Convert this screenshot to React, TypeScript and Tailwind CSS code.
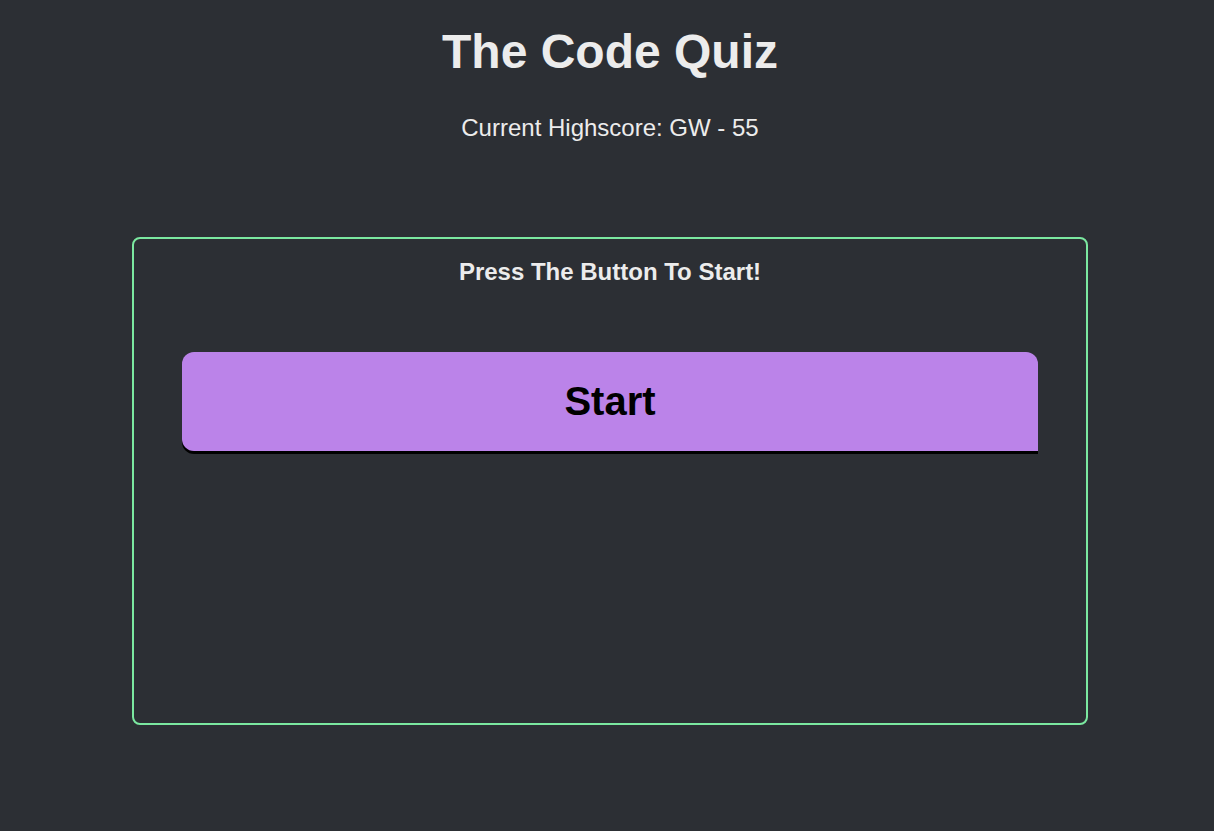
export default function App() {
  return (
    <div className="min-h-[831px] w-full bg-[#2c2f34] pl-[6px] font-['Liberation_Sans',Arial,sans-serif] text-[#ececec]">
      <header className="flex flex-col items-center pt-[24px]">
        <h1 className="text-[48px] font-bold leading-[56px]">The Code Quiz</h1>
        <p className="mt-[34px] text-[24px] leading-[28px]">Current Highscore: GW - 55</p>
      </header>

      {/* quiz card */}
      <main className="ml-[126px] mt-[95px] flex h-[488px] w-[956px] flex-col items-center rounded-[8px] border-2 border-[#7be8a0] px-[48px]">
        <h2 className="mt-[19px] text-[24px] font-bold leading-[28px]">Press The Button To Start!</h2>
        <button className="mt-[66px] flex h-[99px] w-[856px] items-center justify-center rounded-t-[12px] rounded-bl-[12px] bg-[#bb83e9] pb-[2px] text-[40px] font-bold text-black shadow-[0_3px_0_#000]">
          Start
        </button>
      </main>
    </div>
  );
}
